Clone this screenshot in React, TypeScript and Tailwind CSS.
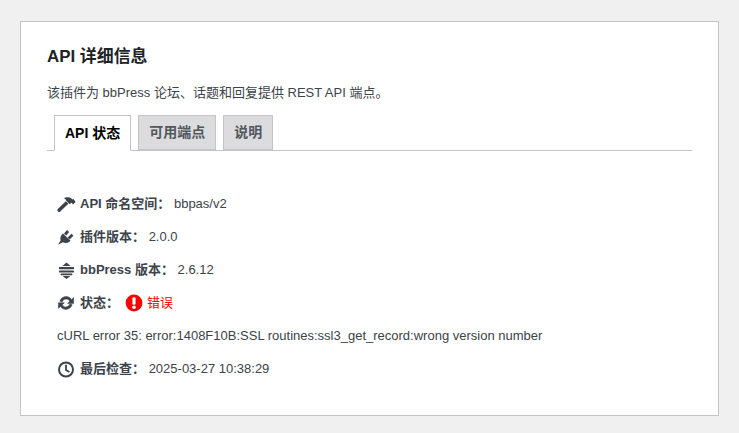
const font = { fontFamily: '"Liberation Sans", "Noto Sans CJK SC", sans-serif' };

function Hammer() {
  return (
    <svg width="20" height="20" viewBox="0 0 20 20" className="shrink-0" fill="#3c434a">
      <path d="M0.8 15 8.8 7.2 11.4 9.8 3.2 17.6C2.5 18.3 1.7 18.3 1 17.6L0.8 17.3C0.2 16.6 0.2 15.7 0.8 15Z" />
      <path d="M6.5 4.2C9 3 12.5 3 14.5 4.6L15.5 5.6 16.5 5 18.6 8 16 10.6 14.6 8.6 12.6 10.2 9 6.6C9 5.2 8 4.6 6.5 4.2Z" />
    </svg>
  );
}

function Plug() {
  return (
    <svg width="20" height="20" viewBox="0 0 20 20" className="shrink-0" fill="#3c434a">
      <path d="M1 17.8 3.6 13.4C3 11 3.6 9 5 7.6L6 6.6 13.6 13.8 12.4 14.8C10.4 16.2 8.2 16.4 5.8 15.2Z" />
      <path d="M7 6.4 10 3 12.2 5 9.2 8.4Z" />
      <path d="M10.6 10.4 14.6 6.8 16.4 8.8 12.6 12.4Z" />
    </svg>
  );
}

function Database() {
  return (
    <svg width="20" height="20" viewBox="0 0 20 20" className="shrink-0" fill="#3c434a">
      <path d="M9.5 2.6 13.6 6H5.4Z" />
      <rect x="2" y="7" width="15" height="2.2" rx="0.6" />
      <rect x="2" y="10.4" width="15" height="2.2" rx="0.6" />
      <rect x="3.6" y="13.6" width="11.8" height="1.6" rx="0.6" />
      <path d="M5.6 16H13.4L9.5 19Z" />
    </svg>
  );
}

function Update() {
  return (
    <svg width="20" height="20" viewBox="0 0 20 20" className="shrink-0" fill="#3c434a" stroke="#3c434a" strokeWidth="0.5">
      <path d="M9.2 3.6C11.4 3.6 13.4 4.7 14.5 6.4L16.6 4.6V10.6H10.6L12.7 8.3C12 6.9 10.7 6 9.2 6 7.4 6 5.8 7.2 5.2 8.9L2.8 8.2C3.7 5.5 6.2 3.6 9.2 3.6Z" />
      <path d="M8.8 16.4C6.6 16.4 4.6 15.3 3.5 13.6L1.4 15.4V9.8H7.4L5.3 11.7C6 13.1 7.3 14 8.8 14 10.6 14 12.2 12.8 12.8 11.1L15.2 11.8C14.3 14.5 11.8 16.4 8.8 16.4Z" />
    </svg>
  );
}

function Clock() {
  return (
    <svg width="20" height="20" viewBox="0 0 20 20" className="shrink-0" fill="none" stroke="#3c434a">
      <circle cx="9" cy="10.5" r="7" strokeWidth="2" />
      <path d="M9 5.8V11L12.4 13" strokeWidth="1.8" />
    </svg>
  );
}

function Alert() {
  return (
    <svg width="20" height="20" viewBox="0 0 20 20" className="shrink-0">
      <circle cx="10" cy="10" r="8.4" fill="#ff0000" />
      <rect x="8.4" y="4.2" width="3.2" height="7.6" rx="1.2" fill="#fff" />
      <circle cx="10" cy="14.2" r="1.8" fill="#fff" />
    </svg>
  );
}

function Row({ icon, label, value }: { icon: React.ReactNode; label: string; value: React.ReactNode }) {
  return (
    <div className="flex h-[33px] items-center">
      {icon}
      <div className="ml-[3px]">
        <strong className="font-bold">{label}</strong> {value}
      </div>
    </div>
  );
}

export default function App() {
  return (
    <div className="min-h-[433px] bg-[#f0f0f1] pt-[21px] pr-[20px] pl-[20px] text-[13px] text-[#3c434a]" style={font}>
      <div className="h-[395px] border border-[#c3c4c7] bg-white pt-[23px] pr-[26px] pl-[26px]">
        <h2 className="m-0 text-[16.9px] leading-[24px] font-bold text-[#1d2327]">API 详细信息</h2>
        <p className="mt-[15px] leading-[18px]">该插件为 bbPress 论坛、话题和回复提供 REST API 端点。</p>
        <div className="mt-[13px] flex h-[36px] gap-[7px] border-b border-[#c3c4c7] pl-[7px]">
          <div className="flex h-[36px] items-center border border-[#c3c4c7] border-b-white bg-white px-[10px] text-[14px] font-bold text-black">API 状态</div>
          <div className="flex h-[35px] items-center border border-[#c3c4c7] bg-[#dcdcde] px-[10px] text-[14px] font-bold text-[#50575e]">可用端点</div>
          <div className="flex h-[35px] items-center border border-[#c3c4c7] bg-[#dcdcde] px-[10px] text-[14px] font-bold text-[#50575e]">说明</div>
        </div>
        <div className="mt-[36px] pl-[10px]">
          <Row icon={<Hammer />} label="API 命名空间：" value="bbpas/v2" />
          <Row icon={<Plug />} label="插件版本：" value="2.0.0" />
          <Row icon={<Database />} label="bbPress 版本：" value="2.6.12" />
          <div className="flex h-[33px] items-center">
            <Update />
            <strong className="ml-[3px] font-bold">状态：</strong>
            <span className="ml-[5px] flex items-center">
              <Alert />
              <span className="ml-[3px] font-normal text-[#ff0000]">错误</span>
            </span>
          </div>
          <div className="flex h-[33px] items-center">cURL error 35: error:1408F10B:SSL routines:ssl3_get_record:wrong version number</div>
          <Row icon={<Clock />} label="最后检查：" value="2025-03-27 10:38:29" />
        </div>
      </div>
    </div>
  );
}
